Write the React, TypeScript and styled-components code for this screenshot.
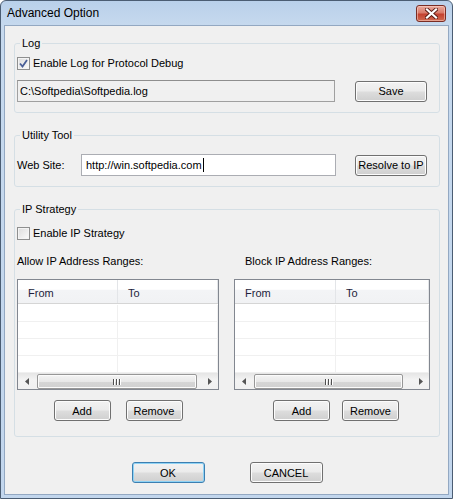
import styled, { createGlobalStyle } from "styled-components";

const GlobalStyle = createGlobalStyle`
  html, body {
    margin: 0;
    padding: 0;
    background: #ffffff;
  }
  body {
    font-family: "Liberation Sans", Arial, sans-serif;
    font-size: 11px;
    color: #000;
  }
`

const Window = styled.div`
  width: 453px;
  height: 499px;
  box-sizing: border-box;
  display: flex;
  flex-direction: column;
  border: 1px solid #4b5d73;
  border-radius: 6px 6px 0 0;
  background: linear-gradient(#b9d0ea 0px, #c6d9ee 24px, #c2d6ed 100%);
  overflow: hidden;
`

const TitleBar = styled.div`
  height: 24px;
  flex: none;
  display: flex;
  align-items: center;
  justify-content: space-between;
  padding: 0 6px 0 6px;
  font-size: 12px;
`

const CloseButton = styled.div`
  width: 30px;
  height: 17px;
  box-sizing: border-box;
  border: 1px solid #7a2d24;
  border-radius: 3px;
  background: linear-gradient(#e9a99c 0%, #d97b6a 45%, #c4412f 55%, #cf6a50 100%);
  box-shadow: inset 0 0 0 1px rgba(255, 220, 210, 0.5);
  display: flex;
  align-items: center;
  justify-content: center;
`

const Client = styled.div`
  flex: 1;
  margin: 0 3px 3px 3px;
  border: 1px solid #93a8c2;
  background: #f0f0f0;
  padding: 9px 8px 0 9px;
  display: flex;
  flex-direction: column;
`

const Group = styled.fieldset<{ $top: number; $pt: number; $pb: number }>`
  margin: ${p => p.$top}px 0 0 0;
  border: 1px solid #d5dfe5;
  border-radius: 3px;
  padding: ${p => p.$pt}px 12px ${p => p.$pb}px 2px;
  min-width: 0;

  legend {
    padding: 0 2px;
    margin-left: 3px;
    line-height: 16px;
  }
`

const CheckRow = styled.label`
  display: flex;
  align-items: center;
  gap: 3px;
  height: 16px;
`

const Box = styled.span`
  width: 13px;
  height: 13px;
  box-sizing: border-box;
  border: 1px solid #8e8f8f;
  background: linear-gradient(135deg, #dcdcdc, #fbfbfb);
  box-shadow: inset 0 0 0 1px #f4f4f4;
  display: flex;
  align-items: center;
  justify-content: center;
`

const Row = styled.div<{ $mt: number }>`
  margin-top: ${p => p.$mt}px;
  display: flex;
  align-items: center;
`

const Field = styled.div<{ $w: number; $readOnly?: boolean }>`
  width: ${p => p.$w}px;
  height: 22px;
  box-sizing: border-box;
  border: 1px solid ${p => (p.$readOnly ? "#a0a0a0" : "#abadb3")};
  border-top-color: ${p => (p.$readOnly ? "#8e8e8e" : "#abadb3")};
  background: ${p => (p.$readOnly ? "#f0f0f0" : "#ffffff")};
  padding-left: ${p => (p.$readOnly ? 2 : 4)}px;
  display: flex;
  align-items: center;
  white-space: nowrap;
`

const Caret = styled.span`
  display: inline-block;
  width: 1px;
  height: 14px;
  background: #000;
  margin-left: 1px;
`

const FieldLabel = styled.span`
  width: 64px;
`

const Button = styled.button<{ $w: number; $focus?: boolean }>`
  width: ${p => p.$w}px;
  height: 21px;
  box-sizing: border-box;
  padding: 0;
  margin: 0;
  font: inherit;
  color: #000;
  border: 1px solid ${p => (p.$focus ? "#3c7fb1" : "#707070")};
  border-radius: 3px;
  background: linear-gradient(#f2f2f2 0%, #ebebeb 48%, #dddddd 52%, #cfcfcf 100%);
  box-shadow: inset 0 0 0 1px ${p => (p.$focus ? "#8fd3f5" : "#fcfcfc")};
`

const PushRight = styled.div`
  margin-left: auto;
`

const Columns = styled.div`
  margin-top: 12px;
  display: grid;
  grid-template-columns: 202px 196px;
  column-gap: 15px;
`

const Column = styled.div<{ $indent: number }>`
  display: flex;
  flex-direction: column;

  & > span {
    height: 16px;
    line-height: 16px;
    padding-left: ${p => p.$indent}px;
  }
`

const List = styled.div`
  margin-top: 10px;
  height: 111px;
  box-sizing: border-box;
  border: 1px solid #828790;
  background: #fff;
  display: flex;
  flex-direction: column;
  overflow: hidden;
`

const Header = styled.div`
  height: 24px;
  flex: none;
  box-sizing: border-box;
  border-bottom: 1px solid #d5d5d5;
  background: linear-gradient(#ffffff 0%, #ffffff 40%, #f3f4f6 45%, #f1f2f4 100%);
  display: flex;
`

const HeadCell = styled.div<{ $w?: number }>`
  width: ${p => (p.$w ? `${p.$w}px` : "auto")};
  flex: ${p => (p.$w ? "none" : 1)};
  box-sizing: border-box;
  border-right: 1px solid #e3e5e8;
  padding: 2px 0 0 10px;
  display: flex;
  align-items: center;
  color: #1e1e3c;
`

const Body = styled.div`
  flex: 1;
  padding-top: 1px;
`

const GridRow = styled.div`
  height: 17px;
  box-sizing: border-box;
  border-bottom: 1px solid #f0f0f0;
  display: flex;
`

const GridCell = styled.div<{ $w?: number }>`
  width: ${p => (p.$w ? `${p.$w}px` : "auto")};
  flex: ${p => (p.$w ? "none" : 1)};
  box-sizing: border-box;
  border-right: 1px solid #f0f0f0;
`

const ScrollBar = styled.div`
  height: 17px;
  flex: none;
  background: linear-gradient(#e5e5e5, #f3f3f3 40%, #f0f0f0);
  display: flex;
  align-items: center;
`

const ArrowCell = styled.div`
  width: 17px;
  height: 17px;
  flex: none;
  display: flex;
  align-items: center;
  justify-content: center;
`

const Thumb = styled.div<{ $w: number }>`
  width: ${p => p.$w}px;
  height: 15px;
  margin-left: 2px;
  box-sizing: border-box;
  border: 1px solid #979797;
  border-radius: 2px;
  background: linear-gradient(#f4f4f4 0%, #e8e8e8 50%, #d6d6d6 52%, #d0d0d0 100%);
  box-shadow: inset 0 0 0 1px #fbfbfb;
  display: flex;
  align-items: center;
  justify-content: center;
  gap: 1px;
`

const Grip = styled.span`
  width: 1px;
  height: 6px;
  background: #505050;
  box-shadow: 1px 0 0 #ffffff;
  margin-right: 1px;
`

const ButtonRow = styled.div<{ $gap: number; $shift: number }>`
  margin-top: 10px;
  display: flex;
  justify-content: center;
  gap: ${p => p.$gap}px;
  padding-left: ${p => p.$shift}px;
`

const Footer = styled.div`
  margin-top: 25px;
  display: flex;
  justify-content: center;
  gap: 45px;
`

const Check = ({ checked }: { checked?: boolean }) => (
  <Box>
    {checked && (
      <svg width="9" height="9" viewBox="0 0 9 9">
        <path d="M1 4.5 L3.5 7.5 L8 1" fill="none" stroke="#4a5f97" strokeWidth="1.8" />
      </svg>
    )}
  </Box>
)

const RangeList = ({ firstCol, thumb }: { firstCol: number; thumb: number }) => (
  <List>
    <Header>
      <HeadCell $w={firstCol}>From</HeadCell>
      <HeadCell>To</HeadCell>
    </Header>
    <Body>
      {[0, 1, 2, 3].map(i => (
        <GridRow key={i}>
          <GridCell $w={firstCol} />
          <GridCell />
        </GridRow>
      ))}
    </Body>
    <ScrollBar>
      <ArrowCell>
        <svg width="4" height="7" viewBox="0 0 4 7">
          <path d="M4 0 L0 3.5 L4 7 Z" fill="#555" />
        </svg>
      </ArrowCell>
      <Thumb $w={thumb}>
        <Grip />
        <Grip />
        <Grip />
      </Thumb>
      <PushRight>
        <ArrowCell>
          <svg width="4" height="7" viewBox="0 0 4 7">
            <path d="M0 0 L4 3.5 L0 7 Z" fill="#555" />
          </svg>
        </ArrowCell>
      </PushRight>
    </ScrollBar>
  </List>
)

const App = () => {
  return (
    <>
      <GlobalStyle />
      <Window>
        <TitleBar>
          <span>Advanced Option</span>
          <CloseButton>
            <svg width="13" height="11" viewBox="0 0 13 11">
              <path d="M2 1.5 L11 9.5 M11 1.5 L2 9.5" stroke="#5a1c14" strokeWidth="4" strokeLinecap="square" />
              <path d="M2 1.5 L11 9.5 M11 1.5 L2 9.5" stroke="#ffffff" strokeWidth="2.2" strokeLinecap="square" />
            </svg>
          </CloseButton>
        </TitleBar>
        <Client>
          <Group $top={0} $pt={4} $pb={10}>
            <legend>Log</legend>
            <CheckRow>
              <Check checked />
              Enable Log for Protocol Debug
            </CheckRow>
            <Row $mt={9}>
              <Field $w={318} $readOnly>C:\Softpedia\Softpedia.log</Field>
              <PushRight>
                <Button $w={72}>Save</Button>
              </PushRight>
            </Row>
          </Group>

          <Group $top={14} $pt={11} $pb={10}>
            <legend>Utility Tool</legend>
            <Row $mt={0}>
              <FieldLabel>Web Site:</FieldLabel>
              <Field $w={255}>
                http://win.softpedia.com
                <Caret />
              </Field>
              <PushRight>
                <Button $w={72}>Resolve to IP</Button>
              </PushRight>
            </Row>
          </Group>

          <Group $top={14} $pt={8} $pb={15}>
            <legend>IP Strategy</legend>
            <CheckRow>
              <Check />
              Enable IP Strategy
            </CheckRow>
            <Columns>
              <Column $indent={0}>
                <span>Allow IP Address Ranges:</span>
                <RangeList firstCol={100} thumb={160} />
                <ButtonRow $gap={15} $shift={0}>
                  <Button $w={57}>Add</Button>
                  <Button $w={57}>Remove</Button>
                </ButtonRow>
              </Column>
              <Column $indent={11}>
                <span>Block IP Address Ranges:</span>
                <RangeList firstCol={101} thumb={149} />
                <ButtonRow $gap={12} $shift={8}>
                  <Button $w={57}>Add</Button>
                  <Button $w={57}>Remove</Button>
                </ButtonRow>
              </Column>
            </Columns>
          </Group>

          <Footer>
            <Button $w={73} $focus>OK</Button>
            <Button $w={73}>CANCEL</Button>
          </Footer>
        </Client>
      </Window>
    </>
  );
};

export default App;
